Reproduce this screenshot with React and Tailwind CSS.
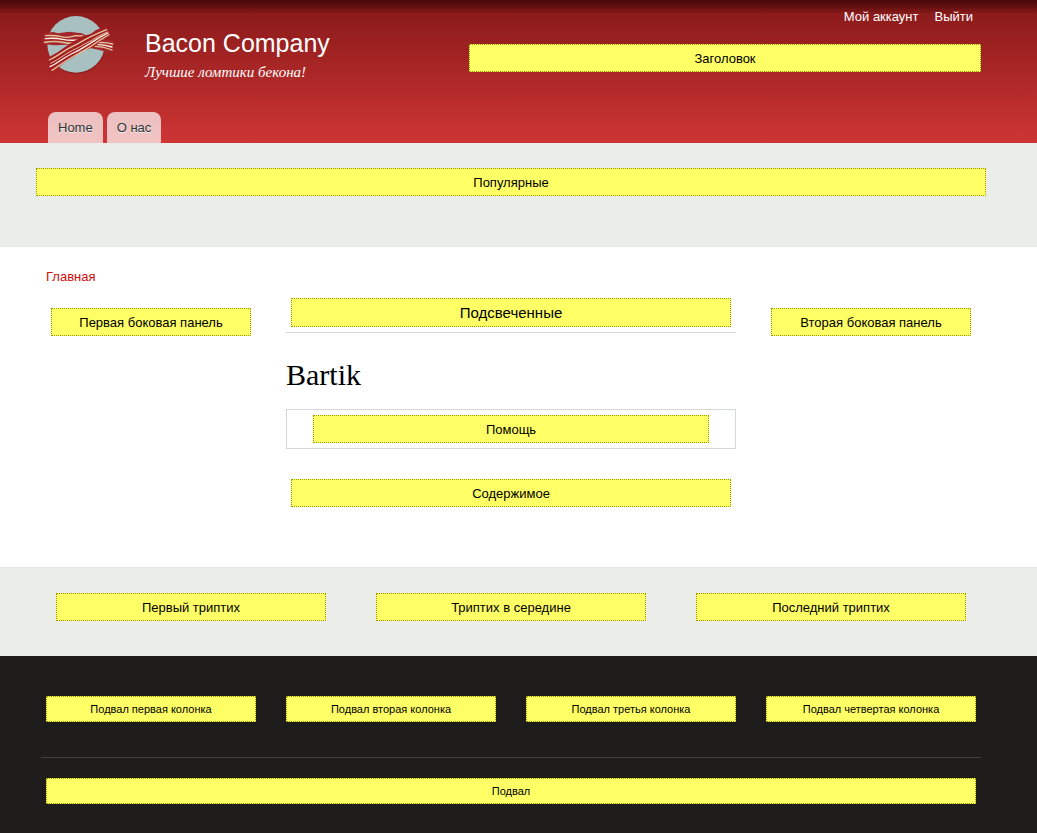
const footerColumns = [
  'Подвал первая колонка',
  'Подвал вторая колонка',
  'Подвал третья колонка',
  'Подвал четвертая колонка',
];
const triptych = ['Первый триптих', 'Триптих в середине', 'Последний триптих'];

function Region({ children, size = 'pt-[6px] pb-1 text-[13px] leading-4' }) {
  return (
    <div className={`border border-dotted border-[#999900] bg-[#ffff66] px-[5px] text-center text-black ${size}`}>
      {children}
    </div>
  );
}

function Container({ className = '', children }) {
  return (
    <div className="pr-[15px]">
      <div className={`mx-auto max-w-[960px] ${className}`}>{children}</div>
    </div>
  );
}

function Logo() {
  return (
    <svg viewBox="0 0 252 216" className="h-[72px] w-[84px]" role="img" aria-label="Bacon Company">
      <ellipse cx="121" cy="112" rx="86" ry="85" fill="#651316" opacity="0.55" />
      <ellipse cx="120" cy="109" rx="86" ry="85" fill="#a9c0c1" />
      <path d="M22 76 L52 72 L66 76 L100 71 L137 76 L172 92 L232 96 L234 133 L205 130 L180 124 L135 114 L95 110 L55 112 L18 108Z" fill="#a3262a" />
      <g fill="none" strokeLinecap="round" strokeLinejoin="round">
        <path d="M29 83 Q55 81 75 86 T118 83 L141 84" stroke="#e2c59b" strokeWidth="4" />
        <path d="M26 103 Q55 98 80 103 T118 105" stroke="#dfbd92" strokeWidth="5" />
        <path d="M28 92 Q55 89 80 94 T131 95" stroke="#fff0e5" strokeWidth="4" />
        <path d="M185 104 Q208 102 230 108 M178 115 Q204 116 228 126" stroke="#e2c59b" strokeWidth="4" />
        <path d="M186 110 Q208 111 228 117" stroke="#fff0e5" strokeWidth="4" />
      </g>
      <path d="M34 150 L65 133 L88 116 L109 103 L139 85 L164 78 L180 66 L211 55 L225 80 L203 92 L184 108 L160 122 L136 130 L113 147 L86 163 L65 181 L42 195Z" fill="#a31e23" />
      <g fill="none" strokeLinecap="round" strokeLinejoin="round">
        <path d="M40 156 C70 142 84 127 108 116 S143 96 160 88 L185 76 L212 65" stroke="#e2c59b" strokeWidth="4" />
        <path d="M44 166 C71 154 84 139 110 127 S144 108 164 99 L188 84 L214 72" stroke="#e2c59b" strokeWidth="3" />
        <path d="M42 176 C68 164 84 148 112 135 S148 114 166 104 L191 88 L216 75" stroke="#fff1e8" strokeWidth="4" />
        <path d="M48 187 C70 173 88 158 114 144 S151 124 169 112 L195 94 L219 80" stroke="#dfbb91" strokeWidth="4" />
      </g>
    </svg>
  );
}

export default function App() {
  return (
    <div className="min-h-screen bg-[#1f1d1b] font-['Liberation_Sans',Arial,sans-serif] text-[13px] leading-4 text-black">
      <header className="bg-[linear-gradient(to_bottom,#48090b_0px,#48090b_1px,transparent_14px),linear-gradient(to_bottom,#851818_0%,#cf3535_100%)]">
        <Container>
          <div className="flex h-[112px] items-start">
            <a href="#home" className="ml-[5px] mt-2"><Logo /></a>
            <div className="ml-[25px] mt-7 text-white">
              <h1 className="text-[25px] leading-[30px]"><a href="#home">Bacon Company</a></h1>
              <p className="mt-1 font-['Liberation_Serif',serif] text-[15px] italic leading-5">Лучшие ломтики бекона!</p>
            </div>
            <div className="ml-auto mr-[10px] w-[512px]">
              <nav aria-label="Аккаунт" className="mr-2 mt-[9px] flex justify-end gap-4 text-white">
                <a href="#account">Мой аккаунт</a>
                <a href="#logout">Выйти</a>
              </nav>
              <div className="mt-[19px]"><Region>Заголовок</Region></div>
            </div>
          </div>
          <nav aria-label="Меню" className="ml-[17px] flex gap-1 text-[#333333] [text-shadow:0_1px_0_#eeeeee]">
            <a href="#home" className="rounded-t-lg bg-white/70 px-[10px] pb-[7px] pt-2">Home</a>
            <a href="#about" className="rounded-t-lg bg-white/70 px-[10px] pb-[7px] pt-2">О нас</a>
          </nav>
        </Container>
      </header>

      <section className="border-b border-[#e7e7e7] bg-[#ebeee8] pb-[50px] pt-[25px]">
        <Container className="px-[5px]"><Region>Популярные</Region></Container>
      </section>

      <div className="bg-white pb-[60px] pt-[22px]">
        <Container>
          <nav aria-label="Навигация" className="px-[15px] text-[#d00d0d]"><a href="#home">Главная</a></nav>
          <div className="mt-[13px] grid grid-cols-[240px_minmax(0,1fr)_240px]">
            <aside className="px-5 pt-[10px]"><Region>Первая боковая панель</Region></aside>
            <main className="px-[15px]">
              <div className="border-b border-[#d3d7d9] px-[5px] pb-[5px]">
                <Region size="py-[5px] text-[15px] leading-[17px]">Подсвеченные</Region>
              </div>
              <h2 className="mt-6 font-['Liberation_Serif',serif] text-[30px] leading-9">Bartik</h2>
              <div className="mt-4 border border-[#d3d7d9] px-[26px] py-[5px]"><Region>Помощь</Region></div>
              <div className="mt-[30px] px-[5px]"><Region>Содержимое</Region></div>
            </main>
            <aside className="px-5 pt-[10px]"><Region>Вторая боковая панель</Region></aside>
          </div>
        </Container>
      </div>

      <section className="border-t border-[#e7e7e7] bg-[#ebeee8] pb-[35px] pt-[25px]">
        <Container className="grid grid-cols-3 gap-[50px] px-[25px]">
          {triptych.map((name) => <Region key={name}>{name}</Region>)}
        </Container>
      </section>

      <footer className="pb-7 pt-10">
        <Container className="px-[10px]">
          <div className="grid grid-cols-4 gap-[30px] px-[5px] pb-[35px]">
            {footerColumns.map((name) => <Region key={name} size="py-[5px] text-[11px] leading-[14px]">{name}</Region>)}
          </div>
          <div className="border-t border-[#3f3f3c] px-[5px] pt-5">
            <Region size="py-[5px] text-[11px] leading-[14px]">Подвал</Region>
          </div>
        </Container>
      </footer>
    </div>
  );
}
